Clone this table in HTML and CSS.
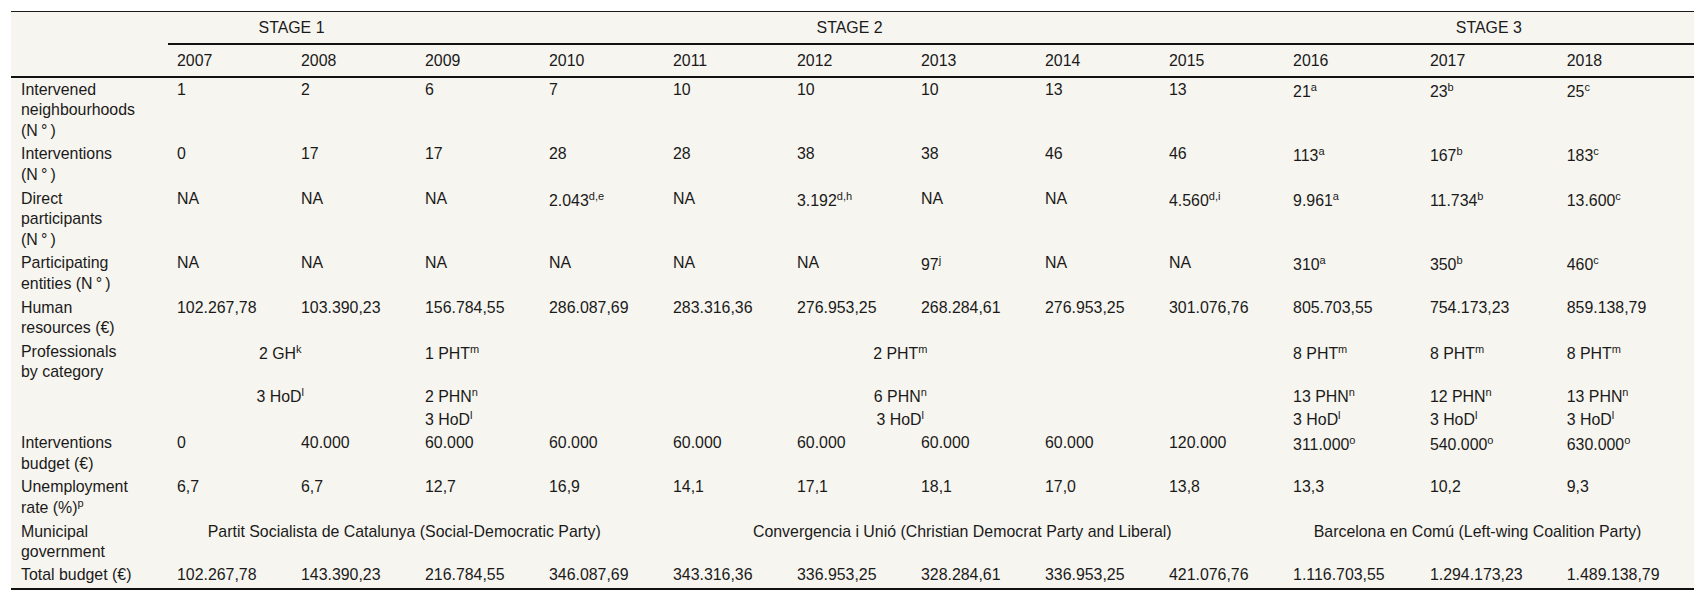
FILE: index.html
```html
<!DOCTYPE html>
<html lang="en">
<head>
<meta charset="utf-8">
<title>Programme indicators by stage</title>
<link rel="stylesheet" href="styles.css">
</head>
<body>
<div class="page">
<table class="data">
<colgroup>
<col class="c-label">
<col class="c-year" span="9">
<col class="c-year-wide" span="3">
</colgroup>
<thead>
<tr class="stages">
<th class="corner" rowspan="2"></th>
<th class="stage" colspan="2">STAGE 1</th>
<th class="stage" colspan="7">STAGE 2</th>
<th class="stage" colspan="3">STAGE 3</th>
</tr>
<tr class="years">
<th>2007</th><th>2008</th><th>2009</th><th>2010</th><th>2011</th><th>2012</th><th>2013</th><th>2014</th><th>2015</th><th>2016</th><th>2017</th><th>2018</th>
</tr>
</thead>
<tbody>
<tr>
<td class="label">Intervened<br>neighbourhoods<br>(N&#8201;°&#8201;)</td>
<td>1</td><td>2</td><td>6</td><td>7</td><td>10</td><td>10</td><td>10</td><td>13</td><td>13</td><td>21<sup>a</sup></td><td>23<sup>b</sup></td><td>25<sup>c</sup></td>
</tr>
<tr>
<td class="label">Interventions<br>(N&#8201;°&#8201;)</td>
<td>0</td><td>17</td><td>17</td><td>28</td><td>28</td><td>38</td><td>38</td><td>46</td><td>46</td><td>113<sup>a</sup></td><td>167<sup>b</sup></td><td>183<sup>c</sup></td>
</tr>
<tr>
<td class="label">Direct<br>participants<br>(N&#8201;°&#8201;)</td>
<td>NA</td><td>NA</td><td>NA</td><td>2.043<sup>d,e</sup></td><td>NA</td><td>3.192<sup>d,h</sup></td><td>NA</td><td>NA</td><td>4.560<sup>d,i</sup></td><td>9.961<sup>a</sup></td><td>11.734<sup>b</sup></td><td>13.600<sup>c</sup></td>
</tr>
<tr>
<td class="label">Participating<br>entities (N&#8201;°&#8201;)</td>
<td>NA</td><td>NA</td><td>NA</td><td>NA</td><td>NA</td><td>NA</td><td>97<sup>j</sup></td><td>NA</td><td>NA</td><td>310<sup>a</sup></td><td>350<sup>b</sup></td><td>460<sup>c</sup></td>
</tr>
<tr>
<td class="label">Human<br>resources (€)</td>
<td>102.267,78</td><td>103.390,23</td><td>156.784,55</td><td>286.087,69</td><td>283.316,36</td><td>276.953,25</td><td>268.284,61</td><td>276.953,25</td><td>301.076,76</td><td>805.703,55</td><td>754.173,23</td><td>859.138,79</td>
</tr>
<tr class="staff">
<td class="label">Professionals<br>by category</td>
<td class="span" colspan="2">2 GH<sup>k</sup><br><br>3 HoD<sup>l</sup></td>
<td>1 PHT<sup>m</sup><br><br>2 PHN<sup>n</sup><br>3 HoD<sup>l</sup></td>
<td class="span" colspan="6">2 PHT<sup>m</sup><br><br>6 PHN<sup>n</sup><br>3 HoD<sup>l</sup></td>
<td>8 PHT<sup>m</sup><br><br>13 PHN<sup>n</sup><br>3 HoD<sup>l</sup></td>
<td>8 PHT<sup>m</sup><br><br>12 PHN<sup>n</sup><br>3 HoD<sup>l</sup></td>
<td>8 PHT<sup>m</sup><br><br>13 PHN<sup>n</sup><br>3 HoD<sup>l</sup></td>
</tr>
<tr>
<td class="label">Interventions<br>budget (€)</td>
<td>0</td><td>40.000</td><td>60.000</td><td>60.000</td><td>60.000</td><td>60.000</td><td>60.000</td><td>60.000</td><td>120.000</td><td>311.000<sup>o</sup></td><td>540.000<sup>o</sup></td><td>630.000<sup>o</sup></td>
</tr>
<tr>
<td class="label">Unemployment<br>rate (%)<sup>p</sup></td>
<td>6,7</td><td>6,7</td><td>12,7</td><td>16,9</td><td>14,1</td><td>17,1</td><td>18,1</td><td>17,0</td><td>13,8</td><td>13,3</td><td>10,2</td><td>9,3</td>
</tr>
<tr>
<td class="label">Municipal<br>government</td>
<td class="span" colspan="4">Partit Socialista de Catalunya (Social-Democratic Party)</td>
<td class="span" colspan="5">Convergencia i Unió (Christian Democrat Party and Liberal)</td>
<td class="span" colspan="3">Barcelona en Comú (Left-wing Coalition Party)</td>
</tr>
<tr class="total">
<td class="label">Total budget (€)</td>
<td>102.267,78</td><td>143.390,23</td><td>216.784,55</td><td>346.087,69</td><td>343.316,36</td><td>336.953,25</td><td>328.284,61</td><td>336.953,25</td><td>421.076,76</td><td>1.116.703,55</td><td>1.294.173,23</td><td>1.489.138,79</td>
</tr>
</tbody>
</table>
</div>
</body>
</html>
```

FILE: styles.css
```css
html, body {
  margin: 0;
  padding: 0;
  background: #ffffff;
}

.page {
  padding: 11px 0 0 11px;
}

.data {
  table-layout: fixed;
  width: 1683px;
  border-collapse: separate;
  border-spacing: 0;
  background: #f7f5ef;
  border-top: 1px solid #1a1a1a;
  font-family: "Liberation Sans", Arial, sans-serif;
  font-size: 15.9px;
  line-height: 1.296;
  color: #1a1a1a;
}

.c-label { width: 156.5px; }
.c-year { width: 124px; }
.c-year-wide { width: 136.83px; }

.data th {
  font-weight: normal;
  text-align: left;
  vertical-align: top;
  padding: 6px 9.5px 4.4px;
}

.data .stage {
  text-align: center;
  border-bottom: 2px solid #111;
}

.data .years th,
.data .corner {
  border-bottom: 2px solid #111;
}

.data td {
  vertical-align: top;
  text-align: left;
  padding: 1.5px 32px 1.5px 9.5px;
  white-space: nowrap;
}

.data td.label {
  padding-left: 10px;
  padding-right: 8px;
}

.data td.span {
  text-align: center;
}

.data .total td {
  padding-top: 1px;
  padding-bottom: 1.5px;
  border-bottom: 2px solid #111;
}

.data sup {
  font-size: 11px;
  vertical-align: 6px;
}

.data td.label sup {
  line-height: 0;
}
```
